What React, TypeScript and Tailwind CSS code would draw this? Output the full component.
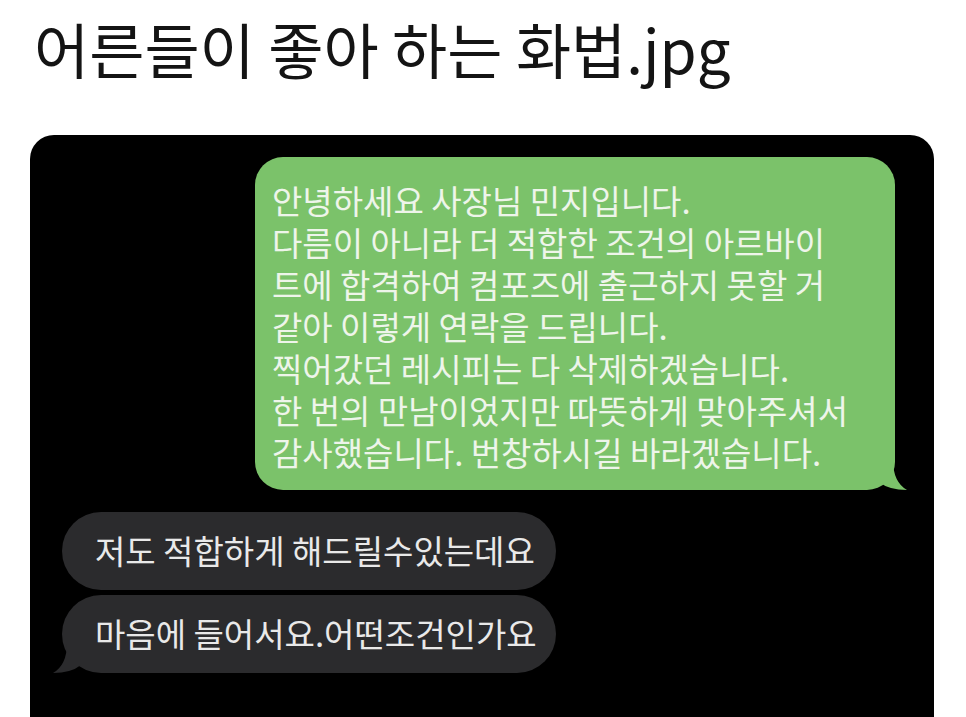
const font = { fontFamily: '"Noto Sans CJK KR", "Noto Sans", sans-serif' };

const message = [
  "안녕하세요 사장님 민지입니다.",
  "다름이 아니라 더 적합한 조건의 아르바이",
  "트에 합격하여 컴포즈에 출근하지 못할 거",
  "같아 이렇게 연락을 드립니다.",
  "찍어갔던 레시피는 다 삭제하겠습니다.",
  "한 번의 만남이었지만 따뜻하게 맞아주셔서",
  "감사했습니다. 번창하시길 바라겠습니다.",
].join("\n");

const GreenBubble = () => (
  <div className="relative ml-[225px] w-[640px] rounded-[28px] bg-[#7bc26a] pl-[17px] pt-[22px] pb-[17px]">
    <p className="whitespace-pre text-[33px] leading-[42px] text-[#eef5ea]">{message}</p>
    <svg
      className="absolute right-[-16px] bottom-0"
      width="40"
      height="30"
      viewBox="0 0 40 30"
    >
      <path d="M0 0 L22 0 Q22 22 36 30 Q18 30 8 22 Q4 24 0 26 Z" fill="#7bc26a" />
    </svg>
  </div>
);

const GrayBubble = ({ text, tail }: { text: string; tail?: boolean }) => (
  <div className="relative flex h-[78px] w-[494px] items-center rounded-[39px] bg-[#2b2b2d] pl-[33px]">
    <span className="whitespace-nowrap text-[33px] text-[#e9e9e9]">
      {text}
    </span>
    {tail && (
      <svg
        className="absolute left-[-9px] bottom-0"
        width="36"
        height="30"
        viewBox="0 0 36 30"
      >
        <path d="M36 0 L14 0 Q14 22 0 30 Q18 30 28 22 Q32 24 36 26 Z" fill="#2b2b2d" />
      </svg>
    )}
  </div>
);

export default function App() {
  return (
    <div className="h-[717px] w-[966px] overflow-hidden bg-white" style={font}>
      <h1 className="pl-[34px] pt-[12px] text-[60px] leading-[72px] font-normal text-[#141414]">
        어른들이 좋아 하는 화법.jpg
      </h1>
      <div className="ml-[30px] mt-[51px] h-[700px] w-[904px] rounded-[24px] bg-black pt-[22px]">
        <GreenBubble />
        <div className="ml-[32px] mt-[22px] flex flex-col gap-[5px]">
          <GrayBubble text="저도 적합하게 해드릴수있는데요" />
          <GrayBubble text="마음에 들어서요.어떤조건인가요" tail />
        </div>
      </div>
    </div>
  );
}
